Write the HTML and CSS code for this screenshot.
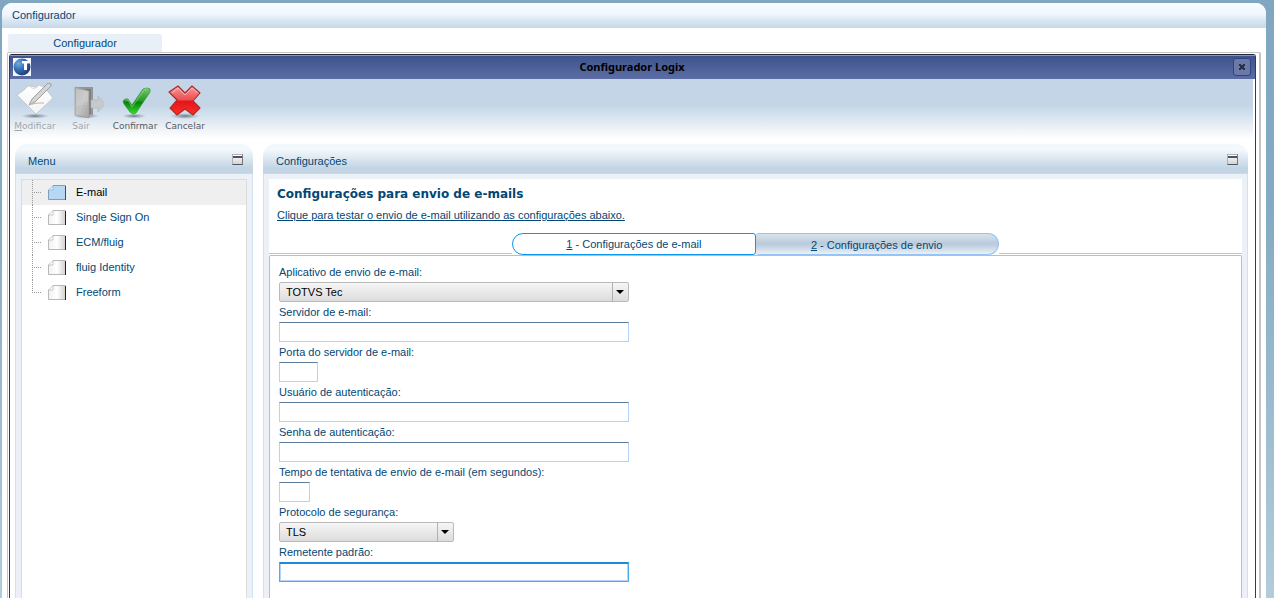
FILE: index.html
```html
<!DOCTYPE html>
<html lang="pt-BR">
<head>
<meta charset="utf-8">
<title>Configurador Logix</title>
<link rel="stylesheet" href="styles.css">
</head>
<body>
<div class="desktop">
<div class="app">
  <header class="app-header">Configurador</header>
  <div class="app-body">
    <div class="app-tabs"><button type="button" class="app-tab">Configurador</button></div>
    <div class="frame">
      <div class="window">
        <div class="titlebar">
          <svg class="logo" viewBox="0 0 18 18" aria-hidden="true">
            <defs><radialGradient id="ball" cx=".3" cy=".3" r=".8"><stop offset="0" stop-color="#6ab0e0"/><stop offset=".5" stop-color="#3568ae"/><stop offset="1" stop-color="#20346f"/></radialGradient></defs>
            <rect width="18" height="18" fill="#f4f7fb"/><circle cx="9" cy="9" r="8.500" fill="url(#ball)"/>
            <path d="M9 3h7.500v2.500H14V12h-3V5.500H9z" fill="#fff"/>
          </svg>
          <h1 class="window-title">Configurador Logix</h1>
          <button type="button" class="close" aria-label="Fechar">
            <svg viewBox="0 0 6 6" width="6" height="6"><path d="M0 0h2v1h2V0h2v2H5v2h1v2H4V5H2v1H0V4h1V2H0z" fill="#2a3048"/></svg>
          </button>
        </div>

        <div class="toolbar">
          <button type="button" class="tool tool-off tool-edit" disabled>
            <svg viewBox="0 0 38 36" aria-hidden="true">
              <defs><linearGradient id="paper" x1="0" y1="0" x2="0" y2="1"><stop offset="0" stop-color="#fff"/><stop offset="1" stop-color="#f4f4f4"/></linearGradient>
              <radialGradient id="shade"><stop offset="0" stop-color="#4a535c" stop-opacity=".75"/><stop offset="1" stop-color="#6d7984" stop-opacity="0"/></radialGradient></defs>
              <ellipse cx="19" cy="33" rx="14" ry="2.500" fill="url(#shade)"/>
              <path d="M1 12L8 7l4-4h3l4 1 4-2 5 2 9 11-17 16z" fill="url(#paper)" stroke="#b9bdc0" stroke-width=".7"/>
              <path d="M14 3c1 3 6 3 8 0" fill="none" stroke="#cfcfcf"/>
              <path d="M13 22l3-6L32 0l3 1v2L19 19z" fill="#d4d4d4" stroke="#8f8f8f" stroke-width=".8"/>
              <path d="M13 22c7-2 8-2 15-2" fill="none" stroke="#b5b5b5"/>
            </svg>
            <span><u>M</u>odificar</span>
          </button>
          <button type="button" class="tool tool-off tool-exit" disabled>
            <svg viewBox="0 0 38 36" aria-hidden="true">
              <defs><linearGradient id="door" x1="0" y1="0" x2="1" y2="1"><stop offset="0" stop-color="#aaa"/><stop offset=".5" stop-color="#c4c4c4"/><stop offset="1" stop-color="#a2a2a2"/></linearGradient></defs>
              <ellipse cx="20" cy="33" rx="13" ry="2.500" fill="url(#shade)"/>
              <path d="M9 4h18v28H9z" fill="#969696"/><path d="M11 6h14v25H11z" fill="#787d80"/>
              <path d="M9 4l14 4v27L9 32z" fill="url(#door)" stroke="#9b9b9b" stroke-width=".7"/>
              <path d="M10 6l12 3v10l-12 5z" fill="#d2d2d2" opacity=".55"/>
              <circle cx="20" cy="21" r="1.300" fill="#eee" stroke="#888" stroke-width=".5"/>
              <path d="M25 17h7v-4l7 8-7 8v-4h-7z" fill="#c6caca" stroke="#b0b7bb" stroke-width=".6"/>
            </svg>
            <span>Sair</span>
          </button>
          <button type="button" class="tool tool-ok">
            <svg viewBox="0 0 38 36" aria-hidden="true">
              <defs><linearGradient id="green" x1="0" y1="0" x2="0" y2="1"><stop offset="0" stop-color="#77c96d"/><stop offset=".48" stop-color="#279b26"/><stop offset=".55" stop-color="#07820b"/><stop offset="1" stop-color="#31e02c"/></linearGradient></defs>
              <ellipse cx="18" cy="33" rx="12" ry="2.500" fill="url(#shade)"/>
              <path d="M7 18l2-2h3l4 6L27 6l4-1 3 1v3L20 30l-3 1-3-2-6-8z" fill="url(#green)" stroke="#30952e" stroke-width=".7"/>
              <path d="M9 17h3l4 7L29 6h3" fill="none" stroke="#a8dda0" stroke-width=".8" opacity=".7"/>
            </svg>
            <span>Confirmar</span>
          </button>
          <button type="button" class="tool tool-cancel">
            <svg viewBox="0 0 38 36" aria-hidden="true">
              <defs><linearGradient id="red" x1="0" y1="0" x2="0" y2="1"><stop offset="0" stop-color="#f79a9a"/><stop offset=".48" stop-color="#ed4e50"/><stop offset=".52" stop-color="#df1719"/><stop offset="1" stop-color="#ff2d29"/></linearGradient></defs>
              <ellipse cx="19" cy="33" rx="15" ry="3" fill="url(#shade)"/>
              <path d="M12 3l7 7 7-7 8 7-7 8 7 7-7 7-8-6-8 6-7-7 7-8-8-8z" fill="url(#red)" stroke="#a8292e" stroke-width="1.100" stroke-linejoin="round"/>
              <path d="M6 10l6-5 7 7 7-7 6 5" fill="none" stroke="#ffc4c2" stroke-width=".8"/>
            </svg>
            <span>Cancelar</span>
          </button>
        </div>

        <div class="panels">
          <section class="panel panel-menu">
            <div class="panel-head"><h2>Menu</h2><button type="button" class="mini" aria-label="Minimizar menu"></button></div>
            <div class="panel-body">
              <ul class="tree">
                <li><button type="button" class="node node-on"><svg viewBox="0 0 18 15" aria-hidden="true"><path d="M5 .5h12.500v14H.5V5z" fill="#b7d8f5"/><path d="M5 .5h12.500M.5 5v9.500H17" fill="none" stroke="#7d9dbb"/><path d="M17.500 1v14" stroke="#32506b"/><path d="M.5 5L5 .5V5z" fill="#deefff" stroke="#8faac2" stroke-width=".6"/></svg>E-mail</button></li>
                <li><button type="button" class="node"><svg viewBox="0 0 18 15" aria-hidden="true"><use href="#sheet"/></svg>Single Sign On</button></li>
                <li><button type="button" class="node"><svg viewBox="0 0 18 15" aria-hidden="true"><use href="#sheet"/></svg>ECM/fluig</button></li>
                <li><button type="button" class="node"><svg viewBox="0 0 18 15" aria-hidden="true"><use href="#sheet"/></svg>fluig Identity</button></li>
                <li><button type="button" class="node"><svg viewBox="0 0 18 15" aria-hidden="true"><use href="#sheet"/></svg>Freeform</button></li>
              </ul>
            </div>
          </section>

          <section class="panel panel-main">
            <div class="panel-head"><h2>Configurações</h2><button type="button" class="mini" aria-label="Minimizar configurações"></button></div>
            <div class="panel-body">
              <div class="content">
                <h3 class="heading">Configurações para envio de e-mails</h3>
                <a class="test-link" href="#">Clique para testar o envio de e-mail utilizando as configurações abaixo.</a>
                <div class="tabs">
                  <span class="rule"></span>
                  <button type="button" class="tab tab-on"><span><u>1</u> - Configurações de e-mail</span></button>
                  <button type="button" class="tab tab-off"><span><u>2</u> - Configurações de envio</span></button>
                  <span class="rule"></span>
                </div>
                <form class="form">
                  <label for="app">Aplicativo de envio de e-mail:</label>
                  <div class="select select-wide"><select id="app"><option>TOTVS Tec</option></select><span class="arrow"></span></div>
                  <label for="server">Servidor de e-mail:</label>
                  <input id="server" class="wide" type="text">
                  <label for="port">Porta do servidor de e-mail:</label>
                  <input id="port" class="port" type="text">
                  <label for="user">Usuário de autenticação:</label>
                  <input id="user" class="wide" type="text">
                  <label for="pass">Senha de autenticação:</label>
                  <input id="pass" class="wide" type="password">
                  <label for="time">Tempo de tentativa de envio de e-mail (em segundos):</label>
                  <input id="time" class="time" type="text">
                  <label for="proto">Protocolo de segurança:</label>
                  <div class="select select-half"><select id="proto"><option>TLS</option></select><span class="arrow"></span></div>
                  <label for="from">Remetente padrão:</label>
                  <input id="from" class="wide current" type="text">
                </form>
              </div>
            </div>
          </section>
        </div>
      </div>
    </div>
  </div>
</div>
</div>
<svg class="defs" width="0" height="0" aria-hidden="true">
  <defs>
    <linearGradient id="sheetfill"><stop offset="0" stop-color="#f1f1f1"/><stop offset=".5" stop-color="#fff"/><stop offset="1" stop-color="#d0d0d0"/></linearGradient>
    <g id="sheet"><path d="M5 .5h12.500v14H.5V5z" fill="url(#sheetfill)"/><path d="M5 .5h12.500M.5 5v9.500H17" fill="none" stroke="#b8b8b8"/><path d="M17.500 1v14" stroke="#222"/><path d="M.5 5L5 .5V5z" fill="#fff" stroke="#aaa" stroke-width=".6"/></g>
  </defs>
</svg>
</body>
</html>
```
FILE: styles.css
```css
* { box-sizing: border-box; }
body {
  margin: 0;
  background: #fff;
  color: #024775;
  font: 11px/14px "Liberation Sans", Arial, sans-serif;
}
button, input, select { font: inherit; color: inherit; }
button { border: 0; padding: 0; background: none; }
h1, h2, h3, ul { margin: 0; padding: 0; font-size: inherit; font-weight: normal; }

.desktop {
  display: flex;
  min-height: 100vh;
  margin-right: 2px;
  padding: 3px 8px 0 2px;
  background: linear-gradient(#80a7bf, #84abc4 35%, #b2ccda);
}
.app {
  flex: 1;
  display: flex;
  flex-direction: column;
  background: #fff;
  border-radius: 10px 10px 0 0;
}
.app-header {
  height: 25px;
  padding: 0 10px;
  line-height: 25px;
  border-radius: 10px 10px 0 0;
  background: linear-gradient(#fafcff, #eff6fe 45%, #d9e6f2 70%, #c7d7ea);
}
.app-body {
  flex: 1;
  display: flex;
  flex-direction: column;
  padding: 6px 5px 0;
}
.app-tabs { display: flex; padding-left: 1px; }
.app-tab {
  width: 154px;
  height: 18px;
  background: #e8eff6;
  border-radius: 2px 2px 0 0;
}
.frame {
  flex: 1;
  display: flex;
  padding: 1px 3px 0 1px;
  border: 1px solid #c4c2c2;
  border-width: 1px 2px 0 1px;
  border-radius: 2px 2px 0 0;
}
.window {
  flex: 1;
  display: flex;
  flex-direction: column;
  border: 1px solid #15456f;
  border-top-color: #222536;
  border-bottom: 0;
  border-radius: 3px 3px 0 0;
}
.titlebar {
  display: flex;
  align-items: center;
  height: 24px;
  padding: 0 4px 0 3px;
  background: linear-gradient(#8b95b5 0 1px, #3e538e 1px, #5c6da3);
}
.logo { width: 18px; height: 18px; }
.window-title {
  flex: 1;
  text-align: center;
  color: #000;
  font: bold 11px/16px "Noto Sans", sans-serif;
}
.close {
  display: grid;
  place-items: center;
  width: 18px;
  height: 18px;
  background: #6c79a8;
  border: 1px solid #2c4480;
  border-radius: 3px;
}

.toolbar {
  display: flex;
  height: 65px;
  margin-right: 2px;
  background: linear-gradient(#c3d5e6 0 26px, #fff 60px);
}
.tool {
  display: flex;
  flex-direction: column;
  align-items: center;
  padding-top: 4px;
  color: #565b60;
  font: 9px/14px "DejaVu Sans", sans-serif;
}
.tool svg { width: 38px; height: 36px; }
.tool-off { color: #a2a7ab; }
.tool-edit { width: 50px; }
.tool-exit { width: 50px; padding-right: 8px; }
.tool-exit svg { margin-left: 8px; }
.tool-ok { width: 50px; }
.tool-cancel { width: 50px; }

.panels {
  flex: 1;
  display: flex;
  gap: 10px;
  padding: 0 7px 0 5px;
}
.panel { display: flex; flex-direction: column; }
.panel-menu { width: 238px; }
.panel-main { flex: 1; }
.panel-head {
  display: flex;
  justify-content: space-between;
  align-items: center;
  height: 30px;
  padding: 4px 10px 0 13px;
  border-bottom: 1px solid #c9d9ed;
  border-radius: 12px 12px 0 0;
  background: linear-gradient(#f3f8fc 0 6px, #eaf2f7 9px, #c3d5e5 24px);
}
.mini {
  width: 11px;
  height: 11px;
  margin-bottom: 3px;
  border: 1px solid #b0b0b0;
  border-bottom-color: #4c5563;
  border-right-color: #777;
  background: linear-gradient(#fff 0 1px, #49536c 1px 3px, #eee 3px, #d4d4d4);
}
.panel-body {
  flex: 1;
  display: flex;
  padding: 5px 5px 0;
  background: #ecf1f7;
  border: 1px solid #d3e0f0;
  border-width: 0 1px;
}
.tree {
  flex: 1;
  list-style: none;
  background: #fff;
  border: 1px solid #dcdcdc;
  border-bottom: 0;
}
.tree li { height: 25px; }
.node {
  display: flex;
  align-items: center;
  gap: 10px;
  width: 100%;
  height: 25px;
  padding-left: 10px;
  line-height: 13px;
  text-align: left;
}
.node::before {
  content: "";
  width: 10px;
  height: 25px;
  margin-right: -4px;
  background:
    repeating-linear-gradient(#999 0 1px, transparent 1px 2px) 0 0 / 1px 100% no-repeat,
    repeating-linear-gradient(90deg, #999 0 1px, transparent 1px 2px) 0 12px / 100% 1px no-repeat;
}
.tree li:last-child .node::before {
  background-size: 1px 13px, 100% 1px;
}
.node svg { width: 18px; height: 15px; }
.node-on { background: #efefef; color: #000; }

.content {
  flex: 1;
  display: flex;
  flex-direction: column;
  align-items: flex-start;
  padding-top: 5px;
  background: #fff;
}
.heading {
  padding-left: 8px;
  font: bold 12px/20px "DejaVu Sans", sans-serif;
}
.test-link {
  margin: 4px 0 11px 8px;
  color: inherit;
}
.tabs {
  align-self: stretch;
  display: grid;
  grid-template-columns: repeat(4, 1fr);
}
.rule { height: 21px; border-bottom: 1px solid #c3c3c3; }
.tab { height: 22px; border: 1px solid #0b96f0; }
.tab-on { border-radius: 11px 3px 3px 11px; }
.tab-off {
  padding-top: 2px;
  border-color: #94c3f5;
  border-left-width: 0;
  border-radius: 3px 11px 11px 3px;
  background: linear-gradient(#d9e3ec, #b9cadb 50%, #eaf0f6);
}
.form {
  flex: 1;
  align-self: stretch;
  display: flex;
  flex-direction: column;
  align-items: flex-start;
  padding: 6px 9px 10px;
  border: 1px solid #bdbdbd;
  border-bottom: 0;
  border-radius: 2px 2px 0 0;
}
.form label { line-height: 20px; }
.form input {
  height: 20px;
  padding: 0 4px;
  background: #fff;
  border: 1px solid #b5d3fa;
  border-top-color: #5b7c9c;
  outline: 0;
}
.form .wide { width: 350px; }
.form .port { width: 39px; }
.form .time { width: 31px; }
.form .current {
  border-color: #49aeef;
  border-top-color: #208ad0;
  box-shadow: inset 0 1px #4b7fa6, inset 1px 0 #b5d3fa, inset -1px -1px #b5d3fa;
}
.select { position: relative; height: 20px; }
.select-wide { width: 350px; }
.select-half { width: 175px; }
.select select {
  appearance: none;
  width: 100%;
  height: 20px;
  padding: 0 20px 0 6px;
  color: #000;
  background: linear-gradient(#f6f6f6, #dcdcdc);
  border: 1px solid #b9b9b9;
  border-radius: 2px;
}
.arrow {
  position: absolute;
  top: 1px;
  right: 1px;
  bottom: 1px;
  width: 16px;
  border-left: 1px solid #b0b0b0;
  pointer-events: none;
}
.arrow::before {
  content: "";
  position: absolute;
  top: 7px;
  left: 3px;
  border: 4px solid transparent;
  border-top-color: #000;
  border-bottom: 0;
}
.defs { position: absolute; }
```
